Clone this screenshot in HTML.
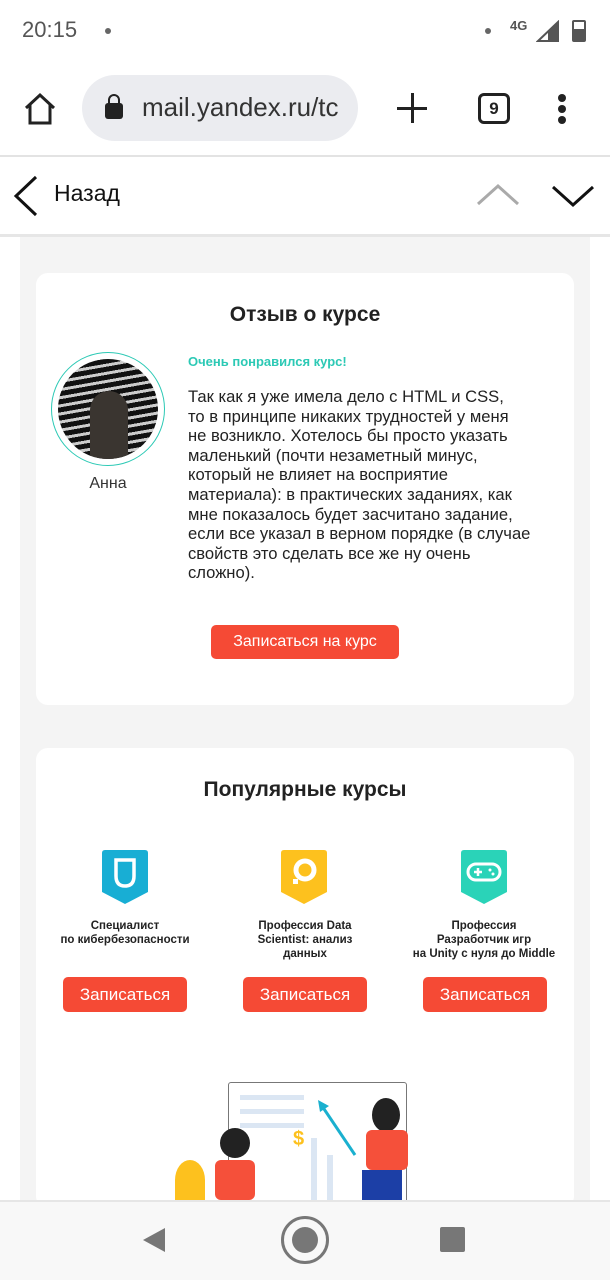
<!DOCTYPE html>
<html><head><meta charset="utf-8"><style>
*{margin:0;padding:0;box-sizing:border-box}
body{width:610px;height:1280px;overflow:hidden;background:#fff;font-family:"Liberation Sans",sans-serif;position:relative;color:#222}
.abs{position:absolute}
.btn{position:absolute;background:#f54a35;color:#fff;border-radius:5px;text-align:center;font-size:17px}
.t{position:absolute;font-size:11.5px;font-weight:bold;text-align:center;line-height:14px;color:#222}
</style></head><body>
<div class="abs" style="left:22px;top:17px;font-size:22px;color:#555">20:15</div>
<div class="abs" style="left:105px;top:28px;width:6px;height:6px;border-radius:50%;background:#666"></div>
<div class="abs" style="left:485px;top:28px;width:6px;height:6px;border-radius:50%;background:#666"></div>
<div class="abs" style="left:510px;top:18px;font-size:13px;font-weight:bold;color:#555">4G</div>
<svg class="abs" style="left:536px;top:20px" width="24" height="22"><path d="M22 2V21H2Z" fill="none" stroke="#555" stroke-width="2"/><path d="M22 2V21H12V12Z" fill="#555"/></svg>
<div class="abs" style="left:572px;top:20px;width:14px;height:22px;border:2px solid #555;border-radius:2px"><div style="position:absolute;bottom:0;left:0;right:0;height:11px;background:#555"></div></div>
<svg class="abs" style="left:22px;top:92px" width="36" height="34"><path d="M4 16L18 3L32 16M8 13V31H28V13" fill="none" stroke="#222" stroke-width="3"/></svg>
<div class="abs" style="left:82px;top:75px;width:276px;height:66px;border-radius:33px;background:#ebecf0"></div>
<div class="abs" style="left:105px;top:103px;width:18px;height:16px;background:#222;border-radius:3px"></div>
<div class="abs" style="left:108px;top:94px;width:12px;height:12px;border:2.5px solid #222;border-radius:6px 6px 0 0"></div>
<div class="abs" style="left:142px;top:92px;width:206px;overflow:hidden;white-space:nowrap;font-size:26px;color:#333">mail.yandex.ru/tc</div>
<div class="abs" style="left:397px;top:107px;width:30px;height:3px;background:#222"></div>
<div class="abs" style="left:411px;top:93px;width:3px;height:30px;background:#222"></div>
<div class="abs" style="left:478px;top:93px;width:32px;height:31px;border:3px solid #222;border-radius:6px;text-align:center;font-size:17px;font-weight:bold;line-height:25px">9</div>
<div class="abs" style="left:558px;top:94px;width:8px;height:8px;border-radius:50%;background:#222;box-shadow:0 11px 0 #222,0 22px 0 #222"></div>
<div class="abs" style="left:0;top:155px;width:610px;height:2px;background:#e3e3e3"></div>
<svg class="abs" style="left:12px;top:175px" width="28" height="42"><path d="M24 2L4 21L24 40" fill="none" stroke="#111" stroke-width="3"/></svg>
<div class="abs" style="left:54px;top:180px;font-size:23px;color:#111">Назад</div>
<svg class="abs" style="left:475px;top:183px" width="46" height="24"><path d="M3 21L23 3L43 21" fill="none" stroke="#aaa" stroke-width="3"/></svg>
<svg class="abs" style="left:550px;top:183px" width="46" height="26"><path d="M3 4L23 22L43 4" fill="none" stroke="#111" stroke-width="3"/></svg>
<div class="abs" style="left:0;top:234px;width:610px;height:3px;background:#e6e6e6"></div>
<div class="abs" style="left:20px;top:237px;width:570px;height:963px;background:#f4f4f4"></div>
<div class="abs" style="left:36px;top:273px;width:538px;height:432px;background:#fff;border-radius:12px"></div>
<div class="abs" style="left:36px;top:303px;width:538px;text-align:center;font-size:21px;font-weight:bold">Отзыв о курсе</div>
<div class="abs" style="left:51px;top:352px;width:114px;height:114px;border-radius:50%;border:1.5px solid #2cc9b5"></div>
<div class="abs" style="left:58px;top:359px;width:100px;height:100px;border-radius:50%;overflow:hidden;background:repeating-linear-gradient(170deg,#111 0 5px,#ccc 5px 8px)"><div style="position:absolute;left:32px;top:32px;width:38px;height:70px;background:#3a3530;border-radius:19px 19px 0 0"></div></div>
<div class="abs" style="left:51px;top:475px;width:114px;text-align:center;font-size:16px;color:#333">Анна</div>
<div class="abs" style="left:188px;top:354px;font-size:13px;font-weight:bold;color:#2cc9b5">Очень понравился курс!</div>
<div class="abs" style="left:188px;top:387px;width:380px;font-size:16.6px;line-height:19.6px;color:#222;white-space:nowrap">Так как я уже имела дело с HTML и CSS,<br>то в принципе никаких трудностей у меня<br>не возникло. Хотелось бы просто указать<br>маленький (почти незаметный минус,<br>который не влияет на восприятие<br>материала): в практических заданиях, как<br>мне показалось будет засчитано задание,<br>если все указал в верном порядке (в случае<br>свойств это сделать все же ну очень<br>сложно).</div>
<div class="btn" style="left:211px;top:625px;width:188px;height:34px;line-height:34px;font-size:16px">Записаться на курс</div>
<div class="abs" style="left:36px;top:748px;width:538px;height:460px;background:#fff;border-radius:12px"></div>
<div class="abs" style="left:36px;top:778px;width:538px;text-align:center;font-size:21px;font-weight:bold">Популярные курсы</div>
<svg class="abs" style="left:102px;top:850px" width="46" height="54"><path d="M3 0H43Q46 0 46 3V42L23 54L0 42V3Q0 0 3 0Z" fill="#18aed4"/><path d="M14 10V26Q14 36 23 36Q32 36 32 26V10Z" fill="none" stroke="#fff" stroke-width="3.5"/></svg>
<svg class="abs" style="left:281px;top:850px" width="46" height="54"><path d="M3 0H43Q46 0 46 3V42L23 54L0 42V3Q0 0 3 0Z" fill="#fdc11e"/><circle cx="24" cy="20" r="9" fill="none" stroke="#fff" stroke-width="5"/><rect x="12" y="29" width="5" height="5" fill="#fff"/></svg>
<svg class="abs" style="left:461px;top:850px" width="46" height="54"><path d="M3 0H43Q46 0 46 3V42L23 54L0 42V3Q0 0 3 0Z" fill="#2ad3b8"/><rect x="7" y="14" width="32" height="16" rx="8" fill="none" stroke="#fff" stroke-width="3"/><path d="M13 22H21M17 18V26" stroke="#fff" stroke-width="2.5"/><circle cx="29" cy="20" r="1.5" fill="#fff"/><circle cx="32" cy="24" r="1.5" fill="#fff"/></svg>
<div class="t" style="left:48px;top:919px;width:154px">Специалист<br>по кибербезопасности</div>
<div class="t" style="left:228px;top:919px;width:154px">Профессия Data<br>Scientist: анализ<br>данных</div>
<div class="t" style="left:402px;top:919px;width:164px">Профессия<br>Разработчик игр<br>на Unity с нуля до Middle</div>
<div class="btn" style="left:63px;top:977px;width:124px;height:35px;line-height:35px">Записаться</div>
<div class="btn" style="left:243px;top:977px;width:124px;height:35px;line-height:35px">Записаться</div>
<div class="btn" style="left:423px;top:977px;width:124px;height:35px;line-height:35px">Записаться</div>
<div class="abs" style="left:228px;top:1082px;width:179px;height:125px;border:1.5px solid #777;border-radius:3px;background:#fff"></div>
<div class="abs" style="left:240px;top:1095px;width:64px;height:5px;background:#dbe6f3;box-shadow:0 14px 0 #dbe6f3,0 28px 0 #dbe6f3"></div>
<div class="abs" style="left:311px;top:1138px;width:6px;height:70px;background:#dbe6f3"></div>
<div class="abs" style="left:327px;top:1155px;width:6px;height:50px;background:#dbe6f3"></div>
<svg class="abs" style="left:315px;top:1100px" width="45" height="60"><path d="M5 3L40 55" stroke="#1ab0cf" stroke-width="3"/><path d="M3 0L14 6L5 12Z" fill="#1ab0cf"/></svg>
<div class="abs" style="left:293px;top:1128px;font-size:20px;font-weight:bold;color:#fdc11e">$</div>
<div class="abs" style="left:175px;top:1160px;width:30px;height:40px;background:#fdc11e;border-radius:50% 50% 0 0"></div>
<div class="abs" style="left:220px;top:1128px;width:30px;height:30px;border-radius:50%;background:#222"></div>
<div class="abs" style="left:215px;top:1160px;width:40px;height:40px;background:#f5503a;border-radius:6px"></div>
<div class="abs" style="left:372px;top:1098px;width:28px;height:34px;border-radius:50%;background:#222"></div>
<div class="abs" style="left:366px;top:1130px;width:42px;height:40px;background:#f5503a;border-radius:6px"></div>
<div class="abs" style="left:362px;top:1170px;width:40px;height:30px;background:#1c3fa6"></div>
<div class="abs" style="left:0;top:1200px;width:610px;height:80px;background:#f8f8f8;border-top:2px solid #e6e6e6"></div>
<svg class="abs" style="left:141px;top:1226px" width="26" height="28"><path d="M24 2V26L2 14Z" fill="#777"/></svg>
<div class="abs" style="left:281px;top:1216px;width:48px;height:48px;border-radius:50%;border:3px solid #777"></div>
<div class="abs" style="left:292px;top:1227px;width:26px;height:26px;border-radius:50%;background:#777"></div>
<div class="abs" style="left:440px;top:1227px;width:25px;height:25px;background:#777;border-radius:2px"></div>
</body></html>
